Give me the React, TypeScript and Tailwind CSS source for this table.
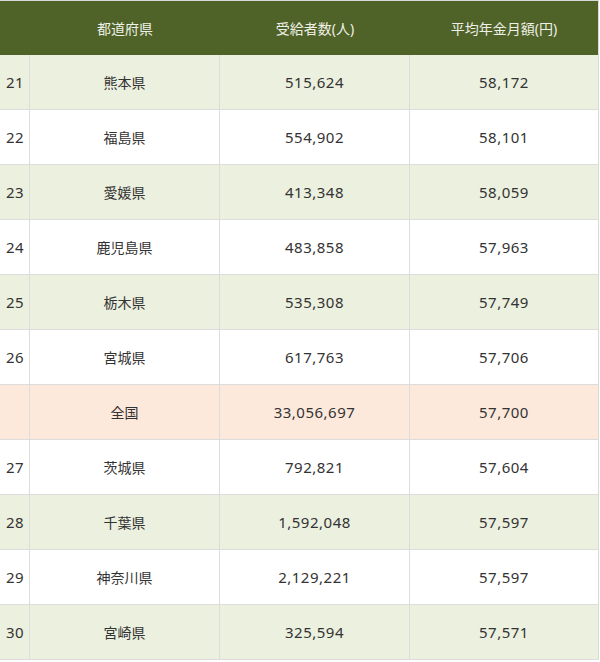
const rows: { rank: string; pref: string; count: string; avg: string; bg: string }[] = [
  { rank: "21", pref: "熊本県", count: "515,624", avg: "58,172", bg: "bg-[#ebf0df]" },
  { rank: "22", pref: "福島県", count: "554,902", avg: "58,101", bg: "bg-white" },
  { rank: "23", pref: "愛媛県", count: "413,348", avg: "58,059", bg: "bg-[#ebf0df]" },
  { rank: "24", pref: "鹿児島県", count: "483,858", avg: "57,963", bg: "bg-white" },
  { rank: "25", pref: "栃木県", count: "535,308", avg: "57,749", bg: "bg-[#ebf0df]" },
  { rank: "26", pref: "宮城県", count: "617,763", avg: "57,706", bg: "bg-white" },
  { rank: "", pref: "全国", count: "33,056,697", avg: "57,700", bg: "bg-[#fde9db]" },
  { rank: "27", pref: "茨城県", count: "792,821", avg: "57,604", bg: "bg-white" },
  { rank: "28", pref: "千葉県", count: "1,592,048", avg: "57,597", bg: "bg-[#ebf0df]" },
  { rank: "29", pref: "神奈川県", count: "2,129,221", avg: "57,597", bg: "bg-white" },
  { rank: "30", pref: "宮崎県", count: "325,594", avg: "57,571", bg: "bg-[#ebf0df]" },
];

export default function App() {
  return (
    <div className="w-[600px] h-[662px] bg-white font-['Noto_Sans','Noto_Sans_CJK_JP',sans-serif] text-[15px] text-[#333]">
      <div className="w-[599px] border-r border-t border-[#d9d9d9]">
        <div className="flex h-[54px] items-center bg-[#4f6228] text-[14px] text-[#eef0e6]">
          <div className="w-[30px]" />
          <div className="w-[190px] text-center">都道府県</div>
          <div className="w-[190px] text-center">受給者数(人)</div>
          <div className="flex-1 text-center">平均年金月額(円)</div>
        </div>
        {rows.map((r) => (
          <div key={r.pref} className={`flex h-[55px] items-center border-b border-[#dcdcdc] ${r.bg}`}>
            <div className="flex h-full w-[30px] items-center pl-[6px] tracking-[0.5px] border-r border-[#dcdcdc]">{r.rank}</div>
            <div className="flex h-full w-[190px] items-center justify-center text-[14px] border-r border-[#dcdcdc]">{r.pref}</div>
            <div className="flex h-full w-[190px] items-center justify-center tracking-[0.5px] border-r border-[#dcdcdc]">{r.count}</div>
            <div className="flex h-full flex-1 items-center justify-center tracking-[0.5px]">{r.avg}</div>
          </div>
        ))}
      </div>
    </div>
  );
}
